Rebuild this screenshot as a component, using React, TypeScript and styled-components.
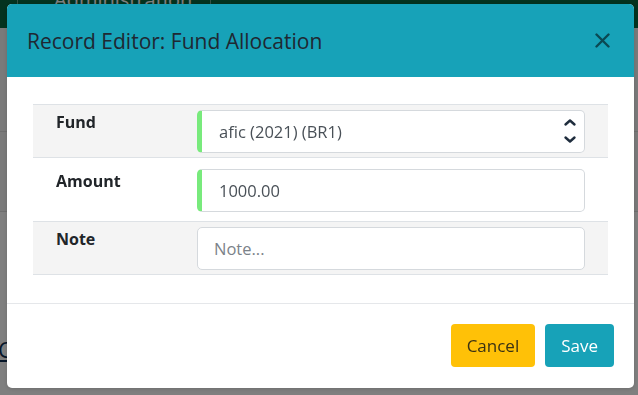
import React, { FC } from 'react';
import styled, { createGlobalStyle } from 'styled-components';

const GlobalStyle = createGlobalStyle`
  html, body {
    margin: 0;
    padding: 0;
    background: #ffffff;
    font-family: "Open Sans", "Noto Sans", sans-serif;
    overflow: hidden;
  }
  * { box-sizing: border-box; }
`;

/* ---------- page behind the modal ---------- */

const PageStyled = styled.div`
  width: 638px;
  height: 395px;
  margin-top: -30px;
  overflow: hidden;
`;

const NavbarStyled = styled.div`
  display: flex;
  align-items: center;
  height: 58px;
  background: #08663e;
  padding-left: 17px;
`;

const NavItemStyled = styled.span`
  font-size: 20px;
  color: #ffffff;
  padding: 0 18px 0 36px;
  border-left: 1px solid rgba(255, 255, 255, 0.4);
  border-right: 1px solid rgba(255, 255, 255, 0.4);
`;

const PageRowStyled = styled.div<{ $tall?: number }>`
  height: ${(p) => p.$tall ?? 80}px;
  border-bottom: 1px solid #dddddd;
  background: #f4f4f4;
`;

const PageLinkStyled = styled.a`
  display: block;
  margin: 122px 0 0 -2px;
  font-size: 22px;
  color: #0b2c52;
  text-decoration: underline;
`;

/* ---------- modal ---------- */

const BackdropStyled = styled.div`
  position: fixed;
  inset: 0;
  background: rgba(0, 0, 0, 0.5);
  display: flex;
  align-items: flex-start;
  padding: 4px 0 0 7px;
`;

const DialogStyled = styled.div`
  width: 627px;
  height: 384px;
  background: #ffffff;
  border-radius: 5px;
  overflow: hidden;
  display: flex;
  flex-direction: column;
  box-shadow: 0 1px 4px rgba(0, 0, 0, 0.15);
`;

const HeaderStyled = styled.div`
  display: flex;
  align-items: center;
  justify-content: space-between;
  height: 73px;
  padding: 0 24px 0 20px;
  background: #17a2b8;
`;

const TitleStyled = styled.h5`
  margin: 0;
  font-size: 21px;
  font-weight: 500;
  color: #1f2832;
`;

const CloseButtonStyled = styled.button`
  display: flex;
  padding: 0;
  border: 0;
  background: transparent;
  color: rgba(0, 0, 0, 0.55);
  cursor: pointer;
`;

const BodyStyled = styled.div`
  flex: 1;
  padding: 27px 26px 0;
`;

const TableStyled = styled.div`
  display: grid;
  grid-template-columns: 152px 1fr;
  border-top: 1px solid #dee2e6;
`;

const LabelCellStyled = styled.div<{ $striped?: boolean; $top: number }>`
  padding: ${(p) => p.$top + 1}px 12px 0 23px;
  font-size: 16px;
  font-weight: 700;
  color: #212529;
  background: ${(p) => (p.$striped ? '#f4f4f4' : '#ffffff')};
  border-bottom: 1px solid #dee2e6;
`;

const ValueCellStyled = styled.div<{ $striped?: boolean; $top: number; $bottom: number }>`
  padding: ${(p) => p.$top}px 23px ${(p) => p.$bottom}px 12px;
  background: ${(p) => (p.$striped ? '#f4f4f4' : '#ffffff')};
  border-bottom: 1px solid #dee2e6;
`;

const FieldWrapStyled = styled.div`
  position: relative;
`;

const InputStyled = styled.input<{ $valid?: boolean }>`
  display: block;
  width: 100%;
  height: 43px;
  padding: 0 36px 0 ${(p) => (p.$valid ? 17 : 16)}px;
  font-family: inherit;
  font-size: 16.5px;
  color: #495057;
  background: #ffffff;
  border: 1px solid #d5d9dd;
  border-left: ${(p) => (p.$valid ? '5px solid #78ea7c' : '1px solid #d5d9dd')};
  border-radius: 5px;
  outline: none;

  &::placeholder {
    color: #7b8289;
  }
`;

const ChevronsStyled = styled.svg`
  position: absolute;
  right: 8px;
  top: 8px;
`;

const FooterStyled = styled.div`
  display: flex;
  justify-content: flex-end;
  gap: 10px;
  height: 85px;
  padding: 20px 20px 0;
  border-top: 1px solid #e5e7ea;
`;

const ButtonStyled = styled.button<{ $variant: 'warning' | 'info' }>`
  height: 43px;
  padding: 0 16px;
  font-family: inherit;
  font-size: 17px;
  border: 0;
  border-radius: 4px;
  cursor: pointer;
  background: ${(p) => (p.$variant === 'warning' ? '#ffc107' : '#17a2b8')};
  color: ${(p) => (p.$variant === 'warning' ? '#3a3214' : '#ffffff')};
`;

interface RowProps {
  label: string;
  striped?: boolean;
  top?: number;
  bottom?: number;
  children: React.ReactNode;
}

const FormRow: FC<RowProps> = (props) => {
  const { label, striped, top = 5, bottom = 4, children } = props;
  return (
    <>
      <LabelCellStyled $striped={striped} $top={top}>
        {label}
      </LabelCellStyled>
      <ValueCellStyled $striped={striped} $top={top} $bottom={bottom}>
        {children}
      </ValueCellStyled>
    </>
  );
};

export default function App() {
  return (
    <>
      <GlobalStyle />
      <PageStyled>
        <NavbarStyled>
          <NavItemStyled>Administration</NavItemStyled>
        </NavbarStyled>
        <PageRowStyled $tall={104} />
        <PageRowStyled $tall={80} />
        <PageLinkStyled>Create</PageLinkStyled>
      </PageStyled>

      <BackdropStyled>
        <DialogStyled>
          <HeaderStyled>
            <TitleStyled>Record Editor: Fund Allocation</TitleStyled>
            <CloseButtonStyled aria-label="Close">
              <svg width="15" height="15" viewBox="0 0 15 15">
                <path d="M1.5 1.5 L13.5 13.5 M13.5 1.5 L1.5 13.5" stroke="currentColor" strokeWidth="2.4" strokeLinecap="round" />
              </svg>
            </CloseButtonStyled>
          </HeaderStyled>

          <BodyStyled>
            <TableStyled>
              <FormRow label="Fund" striped top={5} bottom={4}>
                <FieldWrapStyled>
                  <InputStyled $valid readOnly value="afic (2021) (BR1)" />
                  <ChevronsStyled width="14" height="26" viewBox="0 0 14 26">
                    <polyline points="2.5,6.5 7,2.5 11.5,6.5" fill="none" stroke="#1f2d3d" strokeWidth="2.4" strokeLinecap="round" strokeLinejoin="round" />
                    <polyline points="2.5,19.5 7,23.5 11.5,19.5" fill="none" stroke="#1f2d3d" strokeWidth="2.4" strokeLinecap="round" strokeLinejoin="round" />
                  </ChevronsStyled>
                </FieldWrapStyled>
              </FormRow>
              <FormRow label="Amount" top={11} bottom={9}>
                <InputStyled $valid readOnly value="1000.00" />
              </FormRow>
              <FormRow label="Note" striped top={5} bottom={4}>
                <InputStyled placeholder="Note..." />
              </FormRow>
            </TableStyled>
          </BodyStyled>

          <FooterStyled>
            <ButtonStyled $variant="warning">Cancel</ButtonStyled>
            <ButtonStyled $variant="info">Save</ButtonStyled>
          </FooterStyled>
        </DialogStyled>
      </BackdropStyled>
    </>
  );
}
